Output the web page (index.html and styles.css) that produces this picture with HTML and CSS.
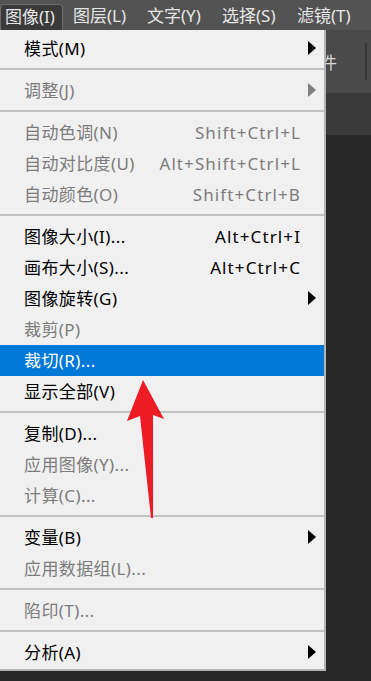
FILE: index.html
```html
<!DOCTYPE html>
<html lang="zh-CN">
<head>
<meta charset="utf-8">
<link rel="stylesheet" href="styles.css">
</head>
<body>
<div class="screen">
  <div class="menubar">
    <span class="mb-item first active">图像(I)</span>
    <span class="mb-item w74">图层(L)</span>
    <span class="mb-item">文字(Y)</span>
    <span class="mb-item">选择(S)</span>
    <span class="mb-item">滤镜(T)</span>
  </div>
  <div class="body">
    <div class="menu">
      <div class="item"><span class="label">模式(M)</span><span class="sub"><i class="tri"></i></span></div>
      <div class="sep"></div>
      <div class="item dis"><span class="label">调整(J)</span><span class="sub"><i class="tri"></i></span></div>
      <div class="sep"></div>
      <div class="item dis"><span class="label">自动色调(N)</span><span class="key">Shift+Ctrl+L</span><span class="sub"></span></div>
      <div class="item dis"><span class="label">自动对比度(U)</span><span class="key">Alt+Shift+Ctrl+L</span><span class="sub"></span></div>
      <div class="item dis"><span class="label">自动颜色(O)</span><span class="key">Shift+Ctrl+B</span><span class="sub"></span></div>
      <div class="sep"></div>
      <div class="item"><span class="label">图像大小(I)...</span><span class="key">Alt+Ctrl+I</span><span class="sub"></span></div>
      <div class="item"><span class="label">画布大小(S)...</span><span class="key">Alt+Ctrl+C</span><span class="sub"></span></div>
      <div class="item"><span class="label">图像旋转(G)</span><span class="sub"><i class="tri"></i></span></div>
      <div class="item dis"><span class="label">裁剪(P)</span><span class="sub"></span></div>
      <div class="item hl"><span class="label">裁切(R)...</span><span class="sub"></span></div>
      <div class="item"><span class="label">显示全部(V)</span><span class="sub"></span></div>
      <div class="sep"></div>
      <div class="item"><span class="label">复制(D)...</span><span class="sub"></span></div>
      <div class="item dis"><span class="label">应用图像(Y)...</span><span class="sub"></span></div>
      <div class="item dis"><span class="label">计算(C)...</span><span class="sub"></span></div>
      <div class="sep"></div>
      <div class="item"><span class="label">变量(B)</span><span class="sub"><i class="tri"></i></span></div>
      <div class="item dis"><span class="label">应用数据组(L)...</span><span class="sub"></span></div>
      <div class="sep"></div>
      <div class="item dis"><span class="label">陷印(T)...</span><span class="sub"></span></div>
      <div class="sep"></div>
      <div class="item"><span class="label">分析(A)</span><span class="sub"><i class="tri"></i></span></div>
    </div>
    <div class="side">
      <div class="side-top"><span class="side-text">件</span><i class="vline"></i></div>
      <div class="side-mid"></div>
    </div>
  </div>
  <svg class="arrow" width="371" height="681" viewBox="0 0 371 681">
    <polygon points="143,380 164,419 153,415 153,518 151,518 140,416 127,421" fill="#ed1c24"/>
  </svg>
</div>
</body>
</html>
```

FILE: styles.css
```css
html, body {
  margin: 0;
  padding: 0;
  background: #282828;
}

.screen {
  position: relative;
  width: 371px;
  height: 681px;
  overflow: hidden;
  background: #282828;
  font-family: "Noto Sans", "Noto Sans CJK SC", sans-serif;
  font-size: 17px;
}

.menubar {
  display: flex;
  height: 30px;
  padding-top: 4px;
  box-sizing: border-box;
  background: #535353;
  color: #e6e6e6;
}

.mb-item {
  width: 75px;
  height: 26px;
  line-height: 24px;
  padding-left: 10px;
  box-sizing: border-box;
  white-space: nowrap;
  flex: none;
}

.mb-item.first {
  width: 63px;
  padding-left: 5px;
}

.mb-item.w74 {
  width: 74px;
}

.mb-item.active {
  background: #3a3a3a;
  border: 1px solid #6c6c6c;
  border-bottom: none;
  border-radius: 4px 4px 0 0;
  padding-left: 4px;
}

.body {
  display: flex;
  align-items: flex-start;
}

.menu {
  width: 324px;
  flex: none;
  background: #f0f0f0;
  border-right: 2px solid #b4b4b4;
  border-bottom: 2px solid #b4b4b4;
  padding: 3px 0 1px;
  color: #000;
}

.item {
  display: flex;
  align-items: center;
  height: 31px;
  padding-left: 24px;
  padding-right: 8px;
  white-space: nowrap;
}

.item.dis {
  color: #7c7c7c;
}

.item.hl {
  background: #0078d7;
  color: #fff;
}

.label {
  flex: 1;
  line-height: 31px;
  letter-spacing: 0.4px;
}

.key {
  line-height: 31px;
  letter-spacing: 1.1px;
  margin-right: -1px;
}

.sub {
  width: 16px;
  height: 31px;
  display: flex;
  align-items: center;
  justify-content: flex-end;
  flex: none;
}

.tri {
  display: block;
  width: 0;
  height: 0;
  border-top: 7.5px solid transparent;
  border-bottom: 7.5px solid transparent;
  border-left: 8px solid #000;
  margin-top: -2px;
}

.item.dis .tri {
  border-left-color: #808080;
}

.sep {
  height: 2px;
  margin: 4px 0 5px;
  background: #c2c2c2;
}

.side {
  flex: 1;
  display: flex;
  flex-direction: column;
}

.side-top {
  height: 63px;
  background: #4a4a4a;
  display: flex;
  align-items: center;
  overflow: hidden;
}

.side-text {
  color: #d8d8d8;
  margin-left: -6px;
  width: 45px;
  flex: none;
}

.vline {
  display: block;
  width: 2px;
  height: 37px;
  background: #363636;
  flex: none;
}

.side-mid {
  height: 42px;
  background: #3a3a3a;
}

.arrow {
  position: absolute;
  left: 0;
  top: 0;
  pointer-events: none;
}
```
